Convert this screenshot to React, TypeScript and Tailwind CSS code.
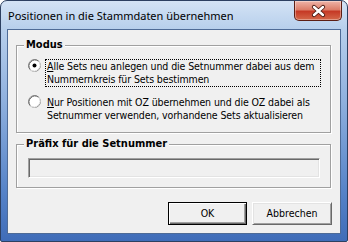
import React from 'react';

const body = { fontFamily: '"DejaVu Sans Condensed", "Liberation Sans", sans-serif' };

function Radio({ checked }: { checked?: boolean }) {
  return (
    <svg width="13" height="13" viewBox="0 0 13 13" className="shrink-0">
      <circle cx="6.5" cy="6.5" r="6" fill="#ffffff" stroke="#8f8f8f" />
      <path d="M2.3 10.7 A6 6 0 0 1 10.7 2.3" fill="none" stroke="#6a6a6a" />
      <path d="M10.7 2.3 A6 6 0 0 1 2.3 10.7" fill="none" stroke="#e3e3e3" />
      {checked && <circle cx="6.5" cy="6.5" r="2" fill="#000000" />}
    </svg>
  );
}

function GroupBox({
  label,
  className,
  children,
}: {
  label: string;
  className: string;
  children: React.ReactNode;
}) {
  return (
    <div className={`relative mx-[8px] mr-[9px] border border-[#a0a0a0] shadow-[inset_1px_1px_0_#ffffff,1px_1px_0_#ffffff] ${className}`}>
      <span className="absolute left-[7px] top-[-8px] bg-[#f0f0f0] px-[2px] text-[11px] font-bold leading-[13px]">
        {label}
      </span>
      {children}
    </div>
  );
}

export default function App() {
  return (
    <div className="w-[348px] h-[242px] bg-white">
      <div className="flex h-[242px] w-[348px] flex-col overflow-hidden rounded-t-[7px] rounded-b-[2px] border border-[#2d4061] bg-[linear-gradient(180deg,#d4e3f5_0px,#b7cfec_28px,#8fb0de_100px,#5683c8_190px,#3f6cb8_241px)]">
        <div className="relative flex h-[28px] items-start justify-between pl-[7px]">
          <span
            className="mt-[7px] text-[11px] leading-[15px] text-black"
            style={{ fontFamily: '"Noto Sans", "Open Sans", sans-serif' }}
          >
            Positionen in die Stammdaten übernehmen
          </span>
          <div className="mr-[5px] flex h-[20px] w-[48px] items-center justify-center rounded-b-[5px] border border-t-0 border-[#5c1e14] bg-[linear-gradient(180deg,#eeb4a8_0%,#dc7e6a_45%,#c63a26_55%,#d4684a_100%)] shadow-[inset_0_0_0_1px_rgba(255,255,255,0.35)]">
            <svg width="17" height="14" viewBox="0 0 17 14">
              <path d="M4 3 L13 11 M13 3 L4 11" stroke="#4a1a12" strokeWidth="4.2" strokeLinecap="round" fill="none" />
              <path d="M4 3 L13 11 M13 3 L4 11" stroke="#ffffff" strokeWidth="2.4" strokeLinecap="round" fill="none" />
            </svg>
          </div>
        </div>
        <div
          className="mx-[6px] mb-[7px] flex flex-1 flex-col border border-[#4e6b97] bg-[#f0f0f0] text-[11px] leading-[13px] text-black"
          style={body}
        >
          <GroupBox label="Modus" className="mt-[15px] h-[88px] pl-[11px] pt-[13px]">
            <div className="flex items-start gap-[4px] text-[10.5px] tracking-[-0.1px]">
              <Radio checked />
              <p className="w-[276px] border border-dotted border-black pl-[1px] first-letter:underline">
                Alle Sets neu anlegen und die Setnummer dabei aus dem Nummernkreis für Sets bestimmen
              </p>
            </div>
            <div className="mt-[8px] flex items-start gap-[4px] text-[10.5px] tracking-[-0.1px]">
              <Radio />
              <p className="w-[276px] border border-transparent pl-[1px] first-letter:underline">
                Nur Positionen mit OZ übernehmen und die OZ dabei als Setnummer verwenden, vorhandene Sets aktualisieren
              </p>
            </div>
          </GroupBox>
          <GroupBox label="Präfix für die Setnummer" className="mt-[11px] h-[44px] pl-[11px] pr-[10px] pt-[13px]">
            <div className="h-[20px] border border-b-white border-l-[#a0a0a0] border-r-white border-t-[#a0a0a0] bg-[#f0f0f0] shadow-[inset_1px_1px_0_#696969,inset_-1px_-1px_0_#e3e3e3]" />
          </GroupBox>
          <div className="mr-[8px] mt-[14px] flex justify-end gap-[5px] text-[10.5px]">
            <button className="h-[23px] w-[79px] border border-black bg-[#f0f0f0] shadow-[inset_1px_1px_0_#ffffff,inset_-1px_-1px_0_#696969,inset_-2px_-2px_0_#a0a0a0]">
              OK
            </button>
            <button className="h-[23px] w-[80px] border border-b-[#696969] border-l-white border-r-[#696969] border-t-white bg-[#f0f0f0] shadow-[inset_1px_1px_0_#e3e3e3,inset_-1px_-1px_0_#a0a0a0]">
              Abbrechen
            </button>
          </div>
        </div>
      </div>
    </div>
  );
}
